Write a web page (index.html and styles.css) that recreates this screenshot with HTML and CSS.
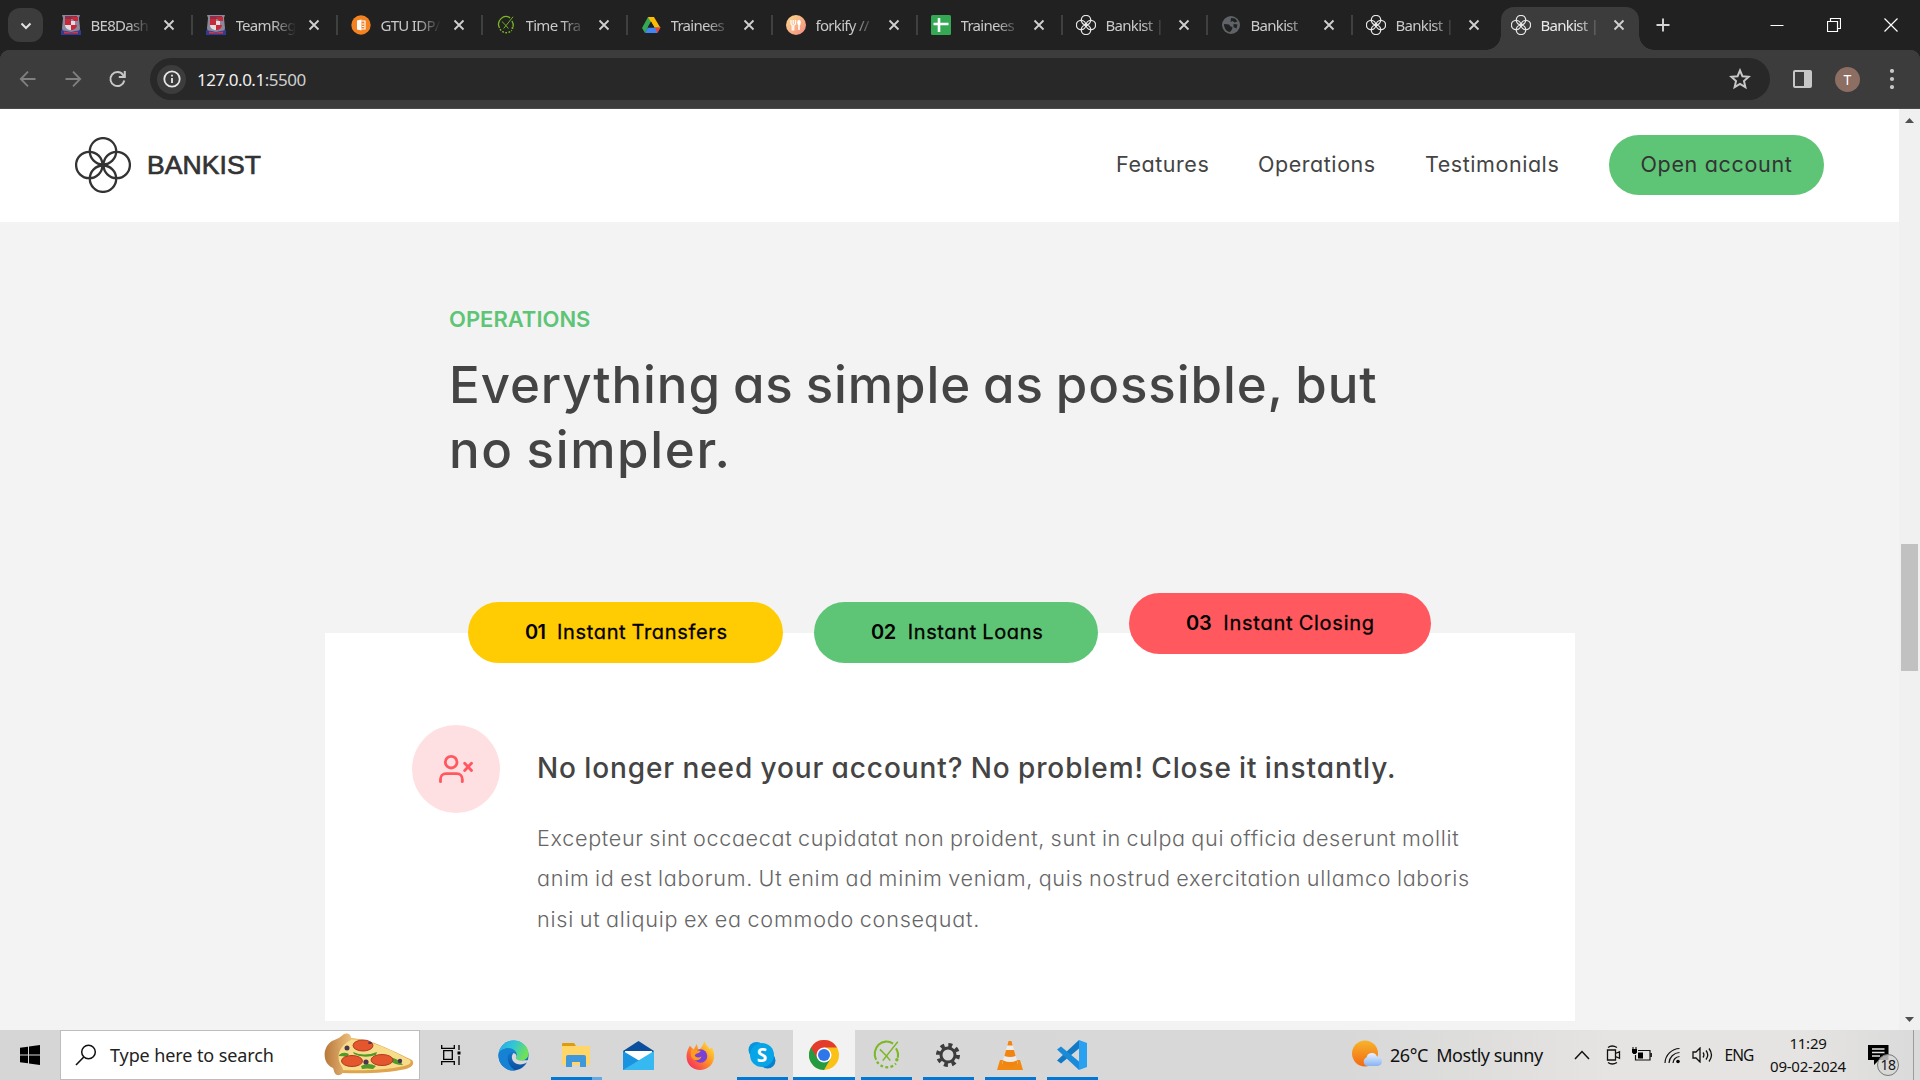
FILE: index.html
```html
<!DOCTYPE html>
<html lang="en">
<head>
<meta charset="utf-8">
<title>Bankist | When Banking meets Minimalist</title>
<link rel="stylesheet" href="styles.css">
</head>
<body>
<svg class="defs" width="0" height="0">
  <defs>
    <linearGradient id="edgeA" x1="0" y1="0" x2="1" y2="0.4"><stop offset="0" stop-color="#2aa5e6"/><stop offset=".5" stop-color="#30c6d8"/><stop offset="1" stop-color="#6ee05a"/></linearGradient>
    <linearGradient id="edgeB" x1="0" y1="0" x2="0" y2="1"><stop offset="0" stop-color="#1b8fe0"/><stop offset="1" stop-color="#0b4ea0"/></linearGradient>
    <linearGradient id="fox" x1="1" y1="0" x2="0" y2="1"><stop offset="0" stop-color="#fff04a"/><stop offset=".45" stop-color="#ff9522"/><stop offset="1" stop-color="#f4176c"/></linearGradient>
    <linearGradient id="fork" x1="0" y1="0" x2="1" y2="1"><stop offset="0" stop-color="#fbdb89"/><stop offset="1" stop-color="#f48982"/></linearGradient>
    <linearGradient id="sun" x1="0" y1="0" x2="0" y2="1"><stop offset="0" stop-color="#f7b42c"/><stop offset="1" stop-color="#f26a12"/></linearGradient>
    <linearGradient id="cloud" x1="0" y1="0" x2="0" y2="1"><stop offset="0" stop-color="#eaf2ff"/><stop offset="1" stop-color="#86b3f2"/></linearGradient>
    <linearGradient id="crust" x1="0" y1="0" x2="1" y2="0"><stop offset="0" stop-color="#b8783a"/><stop offset="1" stop-color="#eec07e"/></linearGradient>
    <symbol id="rings" viewBox="0 0 56 56"><g fill="none" stroke="currentColor"><circle cx="28" cy="14.3" r="13.2"/><circle cx="28" cy="41.7" r="13.2"/><circle cx="14.3" cy="28" r="13.2"/><circle cx="41.7" cy="28" r="13.2"/></g></symbol>
    <symbol id="close" viewBox="0 0 12 12"><path d="M1.500 1.500l9 9M10.500 1.500l-9 9" stroke="currentColor" stroke-width="1.800" fill="none"/></symbol>
    <symbol id="crest" viewBox="0 0 20 20"><path d="M1 0h18l-1 3 1 10-1 6H2l-1-6L2 3z" fill="#8d879c"/><path d="M4 1h12v3H4z" fill="#8b3048"/><path d="M4 4h6v6H4zM10 10h6c0 3-3 5-6 5z" fill="#c8283a"/><path d="M10 6h4v4h-4zM4 10h6v5c-3 0-6-2-6-5z" fill="#e3dde2"/><path d="M10 2h7v4h-4z" fill="#c9283b"/><path d="M0 15l10 2 10-2v5H0z" fill="#2f3c94"/><path d="M3 16.500l7 1 7-1v2H3z" fill="#d3374c"/></symbol>
    <symbol id="timer" viewBox="0 0 28 34"><g fill="none" stroke="#7bb824"><path d="M3 22A12.500 13 0 0 1 21 5" stroke-width="2.200"/><path d="M24 10a13 13 0 0 1 2 10" stroke-width="2.200"/><path d="M7 11l7 7L26 3M14 18l-4 5M14 18l4 5" stroke-width="1.600"/><path d="M4 24a12 11 0 0 0 20 2" stroke-width="2.400" stroke-dasharray="3 2.400"/></g><circle cx="25" cy="22" r="1.800" fill="#7bb824"/></symbol>
  </defs>
</svg>

<header class="tabstrip">
  <button class="tab-search"><svg width="12" height="8" viewBox="0 0 12 8"><path d="M1.500 1.500L6 6l4.500-4.500" fill="none" stroke="#e3e3e3" stroke-width="2"/></svg></button>
  <nav class="tabs">
    <div class="tab"><svg class="fav"><use href="#crest"/></svg><span>BE8Dash</span><svg class="x"><use href="#close"/></svg></div>
    <div class="tab"><svg class="fav"><use href="#crest"/></svg><span>TeamReg</span><svg class="x"><use href="#close"/></svg></div>
    <div class="tab"><svg class="fav" viewBox="0 0 20 20"><circle cx="10" cy="10" r="9.700" fill="#f58220"/><path d="M6 5.500l4.500-1v11L6 14.500z" fill="#fff"/><path d="M10.500 6H14v8h-3.500M11 9h2M11 11.500h2" fill="none" stroke="#fff" stroke-width="1.200"/></svg><span>GTU IDP/</span><svg class="x"><use href="#close"/></svg></div>
    <div class="tab"><svg class="fav"><use href="#timer"/></svg><span>Time Tra</span><svg class="x"><use href="#close"/></svg></div>
    <div class="tab"><svg class="fav" viewBox="0 0 20 20"><path d="M7 2h6l-9 16-3-5z" fill="#34a853"/><path d="M7 2h6l6.500 11h-6z" fill="#fbbc04"/><path d="M4 18l3-5.500h12.500L16 18z" fill="#4285f4"/><path d="M14 12.500h5.500L16.500 18z" fill="#ea4335"/><path d="M10 6.500l3.500 6h-7z" fill="#202120"/></svg><span>Trainees</span><svg class="x"><use href="#close"/></svg></div>
    <div class="tab"><svg class="fav" viewBox="0 0 20 20"><circle cx="10" cy="10" r="10" fill="url(#fork)"/><path d="M5 5v3.500q0 1.500 1.200 1.700V15h1.600v-4.800Q9.500 10 9.500 8.500V5M7.200 5v4" fill="none" stroke="#fff" stroke-width="1.200"/><ellipse cx="13" cy="7.500" rx="1.800" ry="2.800" fill="#fff"/><path d="M13 9v6" stroke="#fff" stroke-width="1.600"/></svg><span>forkify //</span><svg class="x"><use href="#close"/></svg></div>
    <div class="tab"><svg class="fav" viewBox="0 0 20 20"><rect width="20" height="20" rx="1.500" fill="#34a853"/><path d="M8 3v14M2.500 9h15" stroke="#fff" stroke-width="2.600"/></svg><span>Trainees</span><svg class="x"><use href="#close"/></svg></div>
    <div class="tab"><svg class="fav ringfav"><use href="#rings"/></svg><span>Bankist |</span><svg class="x"><use href="#close"/></svg></div>
    <div class="tab"><svg class="fav" viewBox="0 0 20 20"><circle cx="10" cy="10" r="9" fill="#5f6368"/><path d="M3 9l5 .5 1.500 2 2 .5-.5 2.500-2 2.500C5.500 17 3 13 3 9zM10 3l4 .5 2.500 3-3 1-2-1.500-2 1zM12.500 9l4 .5-1 4-3-1.500z" fill="#202120"/></svg><span>Bankist</span><svg class="x"><use href="#close"/></svg></div>
    <div class="tab nosep"><svg class="fav ringfav"><use href="#rings"/></svg><span>Bankist |</span><svg class="x"><use href="#close"/></svg></div>
    <div class="tab active"><svg class="fav ringfav"><use href="#rings"/></svg><span>Bankist |</span><svg class="x"><use href="#close"/></svg></div>
  </nav>
  <button class="new-tab"><svg width="14" height="14" viewBox="0 0 14 14"><path d="M7 .5v13M.5 7h13" stroke="#d5d5d5" stroke-width="1.900"/></svg></button>
  <div class="winctl">
    <svg width="14" height="14" viewBox="0 0 14 14"><path d="M.5 7.500h13" stroke="#fff"/></svg>
    <svg width="14" height="14" viewBox="0 0 14 14"><path d="M.5 3.500h10v10H.5zM3.500 3.500v-3h10v10h-3" fill="none" stroke="#fff" stroke-width="1.200"/></svg>
    <svg width="14" height="14" viewBox="0 0 14 14"><path d="M.5.5l13 13M13.500.5l-13 13" stroke="#fff" stroke-width="1.200"/></svg>
  </div>
</header>

<div class="toolbar">
  <svg class="tb dim" viewBox="0 0 20 20"><path d="M17.500 10H3M10 2.700L2.800 10l7.200 7.300" fill="none" stroke="currentColor" stroke-width="1.800"/></svg>
  <svg class="tb dim" viewBox="0 0 20 20"><path d="M2.500 10H17M10 2.700l7.200 7.300-7.200 7.300" fill="none" stroke="currentColor" stroke-width="1.800"/></svg>
  <svg class="tb" viewBox="0 0 20 20"><path d="M16.300 11.500A7 7 0 1 1 15 5.800l1.500 2" fill="none" stroke="currentColor" stroke-width="2"/><path d="M16.800 2v6h-6" fill="none" stroke="currentColor" stroke-width="2"/></svg>
  <div class="omnibox">
    <span class="info"><svg width="18" height="18" viewBox="0 0 18 18"><circle cx="9" cy="9" r="7.700" fill="none" stroke="#e8e8e8" stroke-width="1.800"/><path d="M9 8v5M9 4.800v1.800" stroke="#e8e8e8" stroke-width="1.800"/></svg></span>
    <span class="url">127.0.0.1<i>:5500</i></span>
    <svg class="star" viewBox="0 0 20 20"><path d="M10 2.200l2.200 5.300 5.700.5-4.300 3.800 1.300 5.600-4.900-3-4.900 3 1.300-5.600L2.100 8l5.700-.5z" fill="none" stroke="#c7c7c7" stroke-width="1.800"/></svg>
  </div>
  <svg class="panel" width="19" height="18" viewBox="0 0 19 18"><rect x="1" y="1" width="17" height="16" rx="1" fill="none" stroke="#c7c7c7" stroke-width="2"/><path d="M11 1h7v16h-7z" fill="#c7c7c7"/></svg>
  <span class="avatar">T</span>
  <svg class="dots" width="6" height="20" viewBox="0 0 6 20"><g fill="#c7c7c7"><circle cx="3" cy="2" r="2.100"/><circle cx="3" cy="10" r="2.100"/><circle cx="3" cy="18" r="2.100"/></g></svg>
</div>

<div class="viewport">
  <main class="page">
    <nav class="nav">
      <div class="logo"><svg width="56" height="56" class="logo-mark"><use href="#rings"/></svg><span>BANKIST</span></div>
      <ul class="links">
        <li class="l1">Features</li><li class="l2">Operations</li><li class="l3">Testimonials</li><li class="cta">Open account</li>
      </ul>
    </nav>
    <section class="operations">
      <div class="title">
        <h2>OPERATIONS</h2>
        <h3>Everything as simple as possible, but<br><span>no simpler.</span></h3>
      </div>
      <div class="card">
        <div class="pills">
          <button class="pill p1"><b>01</b><span>Instant Transfers</span></button>
          <button class="pill p2"><b>02</b><span>Instant Loans</span></button>
          <button class="pill p3"><b>03</b><span>Instant Closing</span></button>
        </div>
        <div class="content">
          <div class="icon"><svg width="40" height="40" viewBox="0 0 24 24" fill="none" stroke="#ff585f" stroke-width="1.700" stroke-linecap="round" stroke-linejoin="round"><circle cx="9.100" cy="7.900" r="3.500"/><path d="M2.700 19.600v-1.500a3.300 3.300 0 0 1 3.300-3.300h6.500a3.300 3.300 0 0 1 3.300 3.300v1.500M17.200 8.600l4.100 4.300M21.300 8.600l-4.100 4.300"/></svg></div>
          <div class="copy">
            <h5>No longer need your account? No problem! Close it instantly.</h5>
            <p>Excepteur sint occaecat cupidatat non proident, sunt in culpa qui officia deserunt mollit<br><span class="r2">anim id est laborum. Ut enim ad minim veniam, quis nostrud exercitation ullamco laboris</span><br><span class="r3">nisi ut aliquip ex ea commodo consequat.</span></p>
          </div>
        </div>
      </div>
    </section>
  </main>
  <aside class="scrollbar">
    <svg width="9" height="5" viewBox="0 0 9 5"><path d="M4.500 0L9 5H0z" fill="#505050"/></svg>
    <div class="thumb"></div>
    <svg class="down" width="9" height="5" viewBox="0 0 9 5"><path d="M4.500 5L9 0H0z" fill="#505050"/></svg>
  </aside>
</div>

<footer class="taskbar">
  <div class="start"><svg width="20" height="20" viewBox="0 0 20 20"><path d="M0 2.800L8 1.700v7.800H0zM9 1.500L20 0v9.500H9zM0 10.500h8v7.800l-8-1.100zM9 10.500h11V20L9 18.500z"/></svg></div>
  <div class="search">
    <svg width="22" height="22" viewBox="0 0 22 22"><circle cx="13.500" cy="8" r="6.800" fill="none" stroke="#111" stroke-width="1.500"/><path d="M8.800 13L1 21" stroke="#111" stroke-width="1.600"/></svg>
    <span>Type here to search</span>
    <svg class="pizza" width="90" height="44" viewBox="0 0 90 44">
      <path d="M24 5C48 5 72 20 88 27c3 4 0 7-6 9-18 4-40 5-64 4C4 34 8 12 24 5z" fill="#e0a44e"/>
      <path d="M24 6C48 6 70 19 86 27c2 3-1 5-6 6-18 4-40 5-64 4C8 31 10 14 24 6z" fill="#f7dd8b"/>
      <path d="M20 1c5-2 8 2 7 6C15 13 11 24 18 34c3 5 0 9-5 8-3-1-3-5-4-7C-2 31-2 14 8 8c5-2 9-4 12-7z" fill="url(#crust)"/>
      <g fill="#4f9a28"><path d="M29 19q11 5 24 0l-1 3q-12 4-22-1zM15 22q4-4 10-1l-2 3q-4-1-8-1zM37 33q7-4 15 0l-3 3q-6-1-11 0zM65 24q9 1 14 8-9 0-14-5z"/></g>
      <g fill="#e4572e" stroke="#b33a1d"><ellipse cx="39" cy="12.500" rx="10" ry="5.500"/><ellipse cx="28" cy="28" rx="10.500" ry="5.500"/><ellipse cx="58" cy="27" rx="11" ry="5.500"/></g>
      <g fill="#4b3553"><circle cx="23" cy="15" r="2.500"/><ellipse cx="46" cy="10" rx="2" ry="1"/><circle cx="42" cy="29" r="2.600"/><circle cx="76" cy="28" r="2.200"/></g>
    </svg>
  </div>
  <div class="apps">
    <div class="app"><svg width="20" height="20" viewBox="0 0 20 20"><path d="M.7 0v3.300h12.600V0M.7 20v-3.300h12.600V20M2.700 5.700h8.600v8.600H2.700zM18 0v5M18 11v9" fill="none" stroke="#000" stroke-width="1.300"/><path d="M16.500 6.500h3v3h-3z"/></svg></div>
    <div class="app"><svg width="31" height="31" viewBox="0 0 32 32"><circle cx="16" cy="16" r="15.500" fill="url(#edgeB)"/><path d="M.6 14C2 5 9 .5 16 .5 25 .5 31.500 7 31.500 14c0 5-4 7.500-8.500 7.500-4 0-5-1.500-4-3C21 14 17 8.500 11 8.500 6 8.500 2 11 .6 14z" fill="url(#edgeA)"/><path d="M.5 15c1-4 5-6.500 10-6.500 3 0 6 1.500 7.500 4C11 11 9 17 10.500 22c1 4 4 8 8 9.300C9 33 0 26 .5 15z" fill="#1682d4"/><path d="M16 13.500c-3 3-2 9 3 11 4 1.500 8 .5 11-1.500l1.500 1c-.5 1-1 1.500-1.500 2C35 20 31 21 27 21c-7 1-9-1-8-3 .7-2-.5-4-3-4.500z" fill="#d9d9d9"/></svg></div>
    <div class="app run two"><svg width="28" height="24" viewBox="0 0 28 24"><path d="M0 1q0-1 1-1h11l2 3H0z" fill="#e09b0c"/><path d="M0 3h27q1 0 1 1v17q0 1-1 1H1q-1 0-1-1z" fill="#ffd667"/><path d="M4 24V14q0-2 2-2h16q2 0 2 2v10h-6v-5h-8v5z" fill="#3f97dc"/></svg></div>
    <div class="app"><svg width="31" height="29" viewBox="0 0 31 29"><path d="M0 10L15.500 0 31 10v6H0z" fill="#0c4f9c"/><path d="M2 10h27v9H2z" fill="#fff"/><path d="M0 10l20 12 11 7H0z" fill="#1a93e0"/><path d="M31 10L0 29h31z" fill="#36b8f1"/></svg></div>
    <div class="app"><svg width="29" height="29" viewBox="0 0 30 30"><path d="M4 5l4 4 3-6 2 6c2-1 4-3 6-9 1 4 4 5 5 8l3-1c5 10 1 22-12 23C3 30-4 18 4 5z" fill="url(#fox)"/><circle cx="15" cy="15.500" r="7" fill="#7a41d8"/><path d="M5 9c4-1 6 1 10 1 0 3-5 2-6 5 2 3 5 2 7 1-1 5-9 6-11-1z" fill="#ff9b20"/></svg></div>
    <div class="app run"><svg width="28" height="28" viewBox="0 0 28 28"><circle cx="8.500" cy="9" r="8" fill="#0694dc"/><circle cx="19.500" cy="19.500" r="8" fill="#0780d0"/><circle cx="14" cy="14" r="12" fill="#06a5e8"/><text x="14" y="21" text-anchor="middle" class="skype">S</text></svg></div>
    <div class="app run cur"><svg width="30" height="30" viewBox="0 0 30 30"><circle cx="15" cy="15" r="15" fill="#fbc116"/><path d="M2 7.500A15 15 0 0 0 15 30l6.500-11.200L15 15z" fill="#249a41"/><path d="M2 7.500A15 15 0 0 1 28 7.500H15L8.500 18.700z" fill="#e33b2e"/><circle cx="15" cy="15" r="7.500" fill="#fff"/><circle cx="15" cy="15" r="6" fill="#2f76ea"/></svg></div>
    <div class="app run"><svg width="31" height="32"><use href="#timer"/></svg></div>
    <div class="app run"><svg width="24" height="24" viewBox="0 0 24 24"><circle cx="12" cy="12" r="10" fill="none" stroke="#3c3c3c" stroke-width="4" stroke-dasharray="3.930 3.930"/><circle cx="12" cy="12" r="7" fill="none" stroke="#3c3c3c" stroke-width="3"/></svg></div>
    <div class="app run"><svg width="26" height="29" viewBox="0 0 26 29"><path d="M3 19h20l3 10H0z" fill="#f08a12"/><path d="M11.500 0h3L21 23q-8 4-16 0z" fill="#ececec"/><path d="M11.500 0h3l1.200 4.500h-5.400zM9 9h8l1.600 6q-5.500 2-11.200 0zM6.200 19.500q7 3 13.600 0l1.200 4q-8 4-16 0z" fill="#f28410"/></svg></div>
    <div class="app run"><svg width="30" height="30" viewBox="0 0 30 30"><path d="M22 0l8 3v24l-8 3z" fill="#29a0f0"/><path d="M22 0v8.500L4 23.500 0 20.500z" fill="#1379c4"/><path d="M22 30v-8.500L4 6.500 0 9.500z" fill="#1a8bd8"/></svg></div>
  </div>
  <div class="weather">
    <svg width="31" height="31" viewBox="0 0 31 31"><circle cx="13" cy="13.500" r="13" fill="url(#sun)"/><path d="M15 26a4.500 4.500 0 0 1-.5-8.500 5.500 5.500 0 0 1 10.500-1 4.800 4.800 0 0 1 1 9.500z" fill="url(#cloud)"/></svg>
    <span>26°C&nbsp; Mostly sunny</span>
  </div>
  <div class="tray">
    <svg width="16" height="10" viewBox="0 0 16 10"><path d="M1 9l7-7.500L15 9" fill="none" stroke="#111" stroke-width="1.500"/></svg>
    <svg width="15" height="20" viewBox="0 0 15 20"><path d="M1.500 5h8v10h-8zM9.500 8.500l4-1.800v6.600l-4-1.800M2 2.500q4-3 9 0M2 17.500q4 3 9 0" fill="none" stroke="#111" stroke-width="1.300"/></svg>
    <svg width="20" height="16" viewBox="0 0 20 16"><path d="M6 3.500h12v9.500H3.500V8M19.300 6v4" fill="none" stroke="#111" stroke-width="1.200"/><path d="M6 5.500h5v6H6zM0 2h5v3.500L3.500 7h-2L0 5.500zM.5 0h1v3h-1zM3.500 0h1v3h-1z"/></svg>
    <svg width="17" height="17" viewBox="0 0 17 17"><g fill="none" stroke="#111" stroke-width="1.200"><path d="M1 16A15 15 0 0 1 15.500 1.500M5 16A11 11 0 0 1 15.500 5.500M9 16a7 7 0 0 1 6.500-6.500" /></g><circle cx="14" cy="14.500" r="1.800"/></svg>
    <svg width="21" height="16" viewBox="0 0 21 16"><path d="M1 5h3l4-4v14l-4-4H1zM11 5.500q1.800 2.500 0 5M14 3.500q3.500 4.500 0 9M17 1.500q5 6.500 0 13" fill="none" stroke="#111" stroke-width="1.300"/></svg>
    <span class="lang">ENG</span>
  </div>
  <div class="clock"><span>11:29</span><span>09-02-2024</span></div>
  <div class="notify"><svg width="21" height="20" viewBox="0 0 21 20"><path d="M0 0h20.500v15H11l-5 5v-5H0z"/><path d="M4 4h12.500M4 7.500h12.500M4 11h8" stroke="#e3e3e2" stroke-width="1.300"/></svg><em>18</em></div>
</footer>
</body>
</html>
```
FILE: styles.css
```css
* { box-sizing: border-box; margin: 0; padding: 0; }
body { width: 1920px; height: 1080px; overflow: hidden; display: flex; flex-direction: column; font-family: "Noto Sans", "Open Sans", sans-serif; background: #f3f3f3; }
button { border: 0; background: none; font: inherit; }
.defs { position: absolute; }
svg { flex: none; display: block; }

/* tab strip */
.tabstrip { height: 50px; background: #202120; display: flex; flex: none; align-items: flex-start; padding-left: 8px; }
.tab-search { width: 35px; height: 34px; margin: 8px 5px 0 0; border-radius: 12px; background: #3c3c3c; display: grid; place-items: center; padding-top: 1px; }
.tabs { display: flex; height: 50px; }
.tab { width: 145px; height: 50px; padding-left: 12.500px; display: flex; align-items: center; color: #c9c9c9; font-size: 15px; letter-spacing: -.7px; position: relative; }
.tab span { width: 60px; margin-left: 10px; margin-right: 12.500px; white-space: nowrap; -webkit-mask-image: linear-gradient(90deg, #000 60%, transparent); mask-image: linear-gradient(90deg, #000 60%, transparent); }
.tab::after { content: ""; position: absolute; right: 0; top: 15px; width: 2px; height: 20px; background: #3f4040; }
.tab.nosep::after { display: none; }
.fav { width: 20px; height: 20px; }
.ringfav { color: #e6e6e6; stroke-width: 3.600; }
.x { width: 12px; height: 12px; color: #d0d0d0; }
.active { z-index: 0; color: #e8e8e8; }
.active::before { content: ""; position: absolute; z-index: -1; left: 3px; top: 7px; width: 138px; height: 43px; background: #3c3c3c; border-radius: 13px 13px 0 0; }
.active::after { left: -12px; right: auto; top: 35px; width: 168px; height: 15px; background: radial-gradient(circle at 0 0, transparent 14.500px, #3c3c3c 15px) 0 0 / 15px 15px no-repeat, radial-gradient(circle at 15px 0, transparent 14.500px, #3c3c3c 15px) 153px 0 / 15px 15px no-repeat; }
.new-tab { width: 30px; height: 50px; display: grid; place-items: center; margin-left: 5px; }
.winctl { margin-left: auto; display: flex; gap: 43px; padding: 18px 22px 0 0; }

/* toolbar */
.toolbar { height: 59px; flex: none; display: flex; align-items: center; padding: 0 22px 0 18px; color: #c7c7c7; border-bottom: 1px solid #4a4a4a; background: radial-gradient(circle at 10px 10px, #3c3c3c 10px, #202120 10.500px) 0 0 / 10px 10px no-repeat, radial-gradient(circle at 0 10px, #3c3c3c 10px, #202120 10.500px) 100% 0 / 10px 10px no-repeat, #3c3c3c; }
.tb { width: 20px; height: 20px; margin-right: 25px; }
.dim { color: #808080; }
.omnibox { width: 1620px; height: 42px; margin-left: -3px; background: #282828; border-radius: 21px; display: flex; align-items: center; padding-left: 7px; }
.info { width: 29px; height: 29px; border-radius: 50%; background: #3c3c3c; display: grid; place-items: center; }
.url { margin-left: 11px; font-size: 17px; letter-spacing: -.48px; color: #f0f0f0; }
.url i { font-style: normal; color: #cfcfcf; }
.star { width: 22px; height: 22px; margin-left: auto; margin-right: 19px; }
.panel { margin-left: 23px; }
.avatar { width: 25px; height: 25px; margin-left: 23px; border-radius: 50%; background: #8d6e63; color: #fff; font-size: 14px; display: grid; place-items: center; }
.dots { margin-left: auto; margin-right: 3px; }

/* page */
.viewport { height: 921px; flex: none; display: flex; }
.page { width: 1899px; background: #f3f3f3; font-family: Inter, sans-serif; font-feature-settings: "cv11"; }
.nav { height: 113px; background: #fff; display: flex; align-items: center; justify-content: space-between; padding: 0 75px 2px; }
.logo { display: flex; align-items: center; gap: 16px; color: #333; font: 26.500px "Liberation Sans", sans-serif; letter-spacing: .1px; -webkit-text-stroke: .7px #333; }
.logo span { padding-top: 1px; }
.logo-mark { stroke-width: 2.300; -webkit-text-stroke: 0; }
.links { list-style: none; display: flex; align-items: center; font-size: 21.500px; line-height: 26px; color: #444; white-space: nowrap; letter-spacing: .55px; }
.links li { padding-bottom: 1px; }
.l1 { width: 142px; } .l2 { width: 167px; } .l3 { width: 184px; }
.cta { width: 215px; height: 60px; border-radius: 30px; background: #5ec576; color: #333; display: grid; place-items: center; letter-spacing: .68px; }
.title { padding: 84px 0 0 449px; height: 411px; white-space: nowrap; }
h2 { font-size: 22px; line-height: 26px; font-weight: 600; letter-spacing: 0; color: #5ec576; }
h3 { margin-top: 20px; font-size: 51px; line-height: 65px; font-weight: 500; letter-spacing: .9px; word-spacing: -2.500px; color: #444; }
h3 span { letter-spacing: 1.650px; }
.card { width: 1250px; height: 388px; margin-left: 325px; background: #fff; display: flex; flex-direction: column; }
.content { display: flex; gap: 37px; padding: 62px 0 0 87px; }
.pills { display: flex; gap: 31px; margin: -31px 0 0 143px; }
.pill { height: 61px; border-radius: 31px; display: flex; align-items: center; gap: 12px; padding: 0 0 2px 57px; font-size: 20px; letter-spacing: .65px; word-spacing: -1px; white-space: nowrap; color: #000; }
.pill span { font-weight: 400; -webkit-text-stroke: .3px #000; }
.pill b { font-weight: 600; }
.p1 { width: 315px; background: #ffcb03; } .p1 b { letter-spacing: -.8px; }
.p2 { width: 284px; background: #5ec576; } .p2 b { letter-spacing: -.5px; }
.p3 { width: 302px; background: #ff585f; transform: translateY(-9px); letter-spacing: .75px; } .p3 b { letter-spacing: -.3px; }
.icon { width: 88px; height: 88px; border-radius: 50%; background: #ffe0e2; display: grid; place-items: center; }
.copy { padding-top: 24px; white-space: nowrap; }
h5 { font-size: 28px; line-height: 38px; font-weight: 500; letter-spacing: .9px; word-spacing: -1px; color: #444; }
.copy p { margin-top: 31px; font-size: 21.600px; line-height: 40.400px; font-weight: 300; letter-spacing: .68px; word-spacing: -1.200px; color: #666; }
.r2 { letter-spacing: .72px; } .r3 { letter-spacing: .78px; }
.scrollbar { width: 21px; background: #f0f0f0; display: flex; flex-direction: column; align-items: center; padding: 9px 0 8px; }
.thumb { width: 17px; height: 127px; background: #c1c1c1; margin-top: 421px; }
.down { margin-top: auto; }

/* taskbar */
.taskbar { height: 50px; flex: none; display: flex; align-items: center; background: linear-gradient(90deg, #d6d6d6 0, #d8d8d8 70%, #e5e4e2 84%, #e5e4e2 94%, #dadada 100%); color: #111; }
.start { width: 60px; display: grid; place-items: center; }
.search { width: 360px; height: 50px; background: #fff; border: 1px solid #bdbdbd; display: flex; align-items: center; padding-left: 14px; font-size: 18px; letter-spacing: -.1px; color: #222; }
.search span { margin-left: 13px; width: 214px; white-space: nowrap; }
.apps { display: flex; height: 50px; }
.app { width: 62px; display: grid; place-items: center; position: relative; }
.app:nth-child(n+3) { left: 1px; }
.run::after { content: ""; position: absolute; left: 6px; bottom: 0; width: 51px; height: 3px; background: #0078d7; }
.two::after { background: linear-gradient(90deg, #0078d7 41px, #62aae6 41px); }
.cur { background: #f2f2f2; } .cur::after { left: 0; width: 62px; }
.skype { font: 700 19px "Open Sans", sans-serif; fill: #fff; }
.weather { margin-left: 250px; width: 222px; display: flex; align-items: center; gap: 7px; font-size: 18px; letter-spacing: -.47px; white-space: nowrap; }
.tray { display: flex; align-items: center; gap: 11.500px; width: 190px; }
.lang { font-size: 15.500px; letter-spacing: -.9px; }
.tray svg:first-child { margin-right: 4px; }
.clock { width: 88px; display: flex; flex-direction: column; align-items: center; font-size: 15px; line-height: 23px; letter-spacing: -.25px; }
.notify { margin-left: 16px; width: 46px; height: 50px; padding-top: 15px; position: relative; border-right: 1px solid #9d9d9d; }
.notify em { position: absolute; left: 9px; top: 24px; width: 22px; height: 22px; border-radius: 50%; background: #d7d7d7cc; border: 1px solid #777; font: 14px/20px "Noto Sans", sans-serif; text-align: center; letter-spacing: -.5px; }
```
